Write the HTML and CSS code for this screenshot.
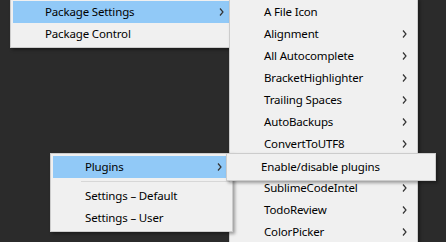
FILE: index.html
```html
<!DOCTYPE html>
<html lang="en">
<head>
    <meta charset="UTF-8">
    <meta name="viewport" content="width=device-width, initial-scale=1.0">
    <title>Package Settings menu</title>
    <link rel="stylesheet" href="styles.css">
</head>
<body>
    <div class="desktop">
        <!-- Preferences menu (top cut off) -->
        <div class="menu menu-prefs">
            <div class="item active">
                <span class="label">Package Settings</span>
                <svg class="chevron" width="5" height="8" viewBox="0 0 5 8"><polyline points="1,0.5 4,4 1,7.5" /></svg>
            </div>
            <div class="item">
                <span class="label">Package Control</span>
            </div>
        </div>

        <!-- Package Settings submenu -->
        <div class="menu menu-packages">
            <div class="item"><span class="label">A File Icon</span></div>
            <div class="item"><span class="label">Alignment</span><svg class="chevron" width="5" height="8" viewBox="0 0 5 8"><polyline points="1,0.5 4,4 1,7.5" /></svg></div>
            <div class="item"><span class="label">All Autocomplete</span><svg class="chevron" width="5" height="8" viewBox="0 0 5 8"><polyline points="1,0.5 4,4 1,7.5" /></svg></div>
            <div class="item"><span class="label">BracketHighlighter</span><svg class="chevron" width="5" height="8" viewBox="0 0 5 8"><polyline points="1,0.5 4,4 1,7.5" /></svg></div>
            <div class="item"><span class="label">Trailing Spaces</span><svg class="chevron" width="5" height="8" viewBox="0 0 5 8"><polyline points="1,0.5 4,4 1,7.5" /></svg></div>
            <div class="item"><span class="label">AutoBackups</span><svg class="chevron" width="5" height="8" viewBox="0 0 5 8"><polyline points="1,0.5 4,4 1,7.5" /></svg></div>
            <div class="item"><span class="label">ConvertToUTF8</span><svg class="chevron" width="5" height="8" viewBox="0 0 5 8"><polyline points="1,0.5 4,4 1,7.5" /></svg></div>
            <!-- row hidden behind the Plugins submenu -->
            <div class="item"></div>
            <div class="item"><span class="label">SublimeCodeIntel</span><svg class="chevron" width="5" height="8" viewBox="0 0 5 8"><polyline points="1,0.5 4,4 1,7.5" /></svg></div>
            <div class="item"><span class="label">TodoReview</span><svg class="chevron" width="5" height="8" viewBox="0 0 5 8"><polyline points="1,0.5 4,4 1,7.5" /></svg></div>
            <div class="item"><span class="label">ColorPicker</span><svg class="chevron" width="5" height="8" viewBox="0 0 5 8"><polyline points="1,0.5 4,4 1,7.5" /></svg></div>
        </div>

        <!-- Package Control submenu -->
        <div class="menu menu-control">
            <div class="item active">
                <span class="label">Plugins</span>
                <svg class="chevron" width="5" height="8" viewBox="0 0 5 8"><polyline points="1,0.5 4,4 1,7.5" /></svg>
            </div>
            <div class="separator"></div>
            <div class="item"><span class="label">Settings – Default</span></div>
            <div class="item"><span class="label">Settings – User</span></div>
        </div>

        <!-- Plugins submenu -->
        <div class="menu menu-plugins">
            <div class="item"><span class="label">Enable/disable plugins</span></div>
        </div>
    </div>
</body>
</html>
```

FILE: styles.css
```css
* {
    box-sizing: border-box;
}
body {
    margin: 0;
    padding: 0;
    background-color: #2b2b2b;
    font-family: "Noto Sans", "Open Sans", sans-serif;
    font-size: 11.5px;
    letter-spacing: -0.15px;
    color: #000;
}
.desktop {
    position: relative;
    width: 446px;
    height: 242px;
    overflow: hidden;
}
.menu {
    position: absolute;
    background-color: #f0f0f0;
    border: 1px solid #cccccc;
    padding: 2px;
    box-shadow: 2px 2px 3px rgba(0, 0, 0, 0.35);
}
.menu-prefs {
    left: 10px;
    top: -2px;
    width: 225px;
}
.menu-packages {
    left: 229px;
    top: -2px;
    width: 189px;
}
.menu-control {
    left: 50px;
    top: 153px;
    width: 183px;
}
.menu-plugins {
    left: 226px;
    top: 153px;
    width: 210px;
}
.item {
    display: flex;
    align-items: center;
    height: 22px;
    padding-left: 32px;
    padding-right: 8px;
    white-space: nowrap;
}
.item.active {
    background-color: #91c9f7;
}
.label {
    flex: 1;
    line-height: 22px;
}
.chevron {
    flex: none;
    fill: none;
    stroke: #333;
    stroke-width: 1.2;
}
.separator {
    height: 4px;
    margin-bottom: 3px;
    margin-left: 28px;
    border-bottom: 1px solid #d7d7d7;
}
```
